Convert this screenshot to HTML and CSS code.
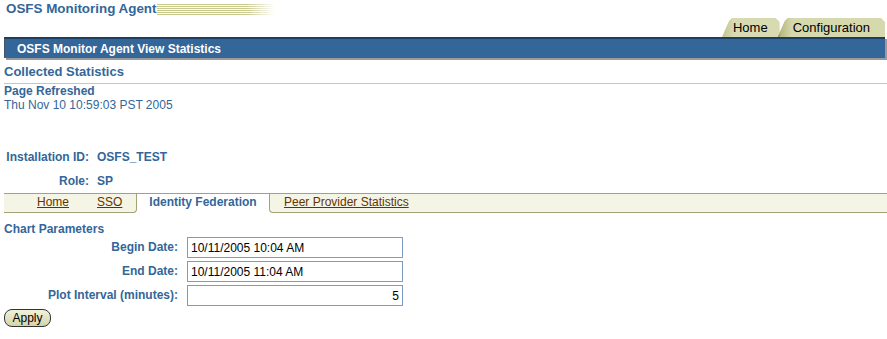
FILE: index.html
```html
<!DOCTYPE html>
<html lang="en">
<head>
  <meta charset="UTF-8">
  <title>OSFS Monitoring Agent</title>
  <link rel="stylesheet" href="styles.css">
</head>
<body>

  <!-- Branding -->
  <div class="branding">
    <span class="app-name">OSFS Monitoring Agent</span>
    <span class="deco"></span>
  </div>

  <!-- Global tabs -->
  <div class="global-tabs">
    <div class="gtab gtab-home">Home</div>
    <div class="gtab gtab-config">Configuration</div>
  </div>

  <div class="title-bar">OSFS Monitor Agent View Statistics</div>

  <div class="section-head">Collected Statistics</div>

  <div class="refresh">
    <div class="refresh-label">Page Refreshed</div>
    <div class="refresh-date">Thu Nov 10 10:59:03 PST 2005</div>
  </div>

  <div class="info">
    <div class="info-label">Installation ID:</div>
    <div class="info-value">OSFS_TEST</div>
    <div class="info-label">Role:</div>
    <div class="info-value">SP</div>
  </div>

  <!-- Sub tabs -->
  <div class="subtabs">
    <div class="subtab-group left">
      <a href="#" class="sublink home-link">Home</a>
      <a href="#" class="sublink">SSO</a>
    </div>
    <div class="subtab-selected">Identity Federation</div>
    <div class="subtab-group right">
      <a href="#" class="sublink">Peer Provider Statistics</a>
    </div>
  </div>

  <div class="chart-head">Chart Parameters</div>

  <div class="chart-form">
    <label class="form-label" for="begin">Begin Date:</label>
    <input class="form-input" id="begin" type="text" value="10/11/2005 10:04 AM">
    <label class="form-label" for="end">End Date:</label>
    <input class="form-input" id="end" type="text" value="10/11/2005 11:04 AM">
    <label class="form-label" for="interval">Plot Interval (minutes):</label>
    <input class="form-input num" id="interval" type="text" value="5">
  </div>

  <button class="apply">Apply</button>

</body>
</html>
```

FILE: styles.css
```css
body {
  font-family: 'Liberation Sans', Arial, sans-serif;
  font-size: 12px;
  color: #336699;
  background-color: white;
  margin: 0;
  padding: 0 2px 0 4px;
}
.branding {
  display: flex;
  align-items: flex-start;
  height: 18px;
}
.app-name {
  font-size: 13.4px;
  font-weight: bold;
  line-height: 18px;
  padding-left: 2px;
}
.deco {
  display: block;
  width: 118px;
  height: 11px;
  margin-top: 4px;
  background:
    linear-gradient(to right, rgba(255,255,255,0) 75%, #fff 100%),
    repeating-linear-gradient(to bottom, #c8c98c 0, #c8c98c 1px, #fff 1px, #fff 2px);
}
.global-tabs {
  display: flex;
  justify-content: flex-end;
  height: 19px;
}
.gtab {
  height: 19px;
  line-height: 20px;
  color: #000;
  font-size: 13px;
  background: linear-gradient(to right, #c2c48e 0, #d8dab2 12px, #d8dab2 100%);
  clip-path: polygon(0 100%, 7px 3px, 10px 0, calc(100% - 4px) 0, 100% 4px, 100% 100%);
}
.gtab-home {
  padding: 0 12px 0 11px;
}
.gtab-config {
  margin-left: -2px;
  padding: 0 15px 0 15px;
  background: linear-gradient(to right, #8e8f5e 0, #b9bb80 3px, #d6d8ae 14px, #d6d8ae 100%);
}
.title-bar {
  height: 19px;
  line-height: 20px;
  background-color: #336699;
  color: white;
  font-weight: bold;
  padding-left: 12px;
  border-top: 2px solid #1d3d63;
  border-left: 1px solid #44556a;
  box-shadow: 2px 2px 0 #9a9a9a;
}
.section-head {
  margin-top: 6px;
  font-size: 13px;
  font-weight: bold;
  line-height: 16px;
  border-bottom: 1px solid #cccc99;
  padding-bottom: 3px;
  margin-right: -2px;
}
.refresh {
  line-height: 14px;
}
.refresh-label {
  font-weight: bold;
}
.info {
  display: grid;
  grid-template-columns: 85px auto;
  column-gap: 8px;
  row-gap: 10px;
  margin-top: 38px;
  font-weight: bold;
  line-height: 14px;
}
.info-label {
  text-align: right;
}
.subtabs {
  display: flex;
  margin-top: 5px;
  margin-right: -2px;
  height: 19px;
  border-top: 1px solid #a3a37a;
  line-height: 17px;
}
.subtab-group {
  background-color: #f5f5e6;
  border-bottom: 1px solid #a3a37a;
  display: flex;
}
.subtab-group.left {
  width: 132px;
  border-right: 1px solid #a3a37a;
  border-bottom-right-radius: 4px;
}
.subtab-group.right {
  flex: 1;
  border-left: 1px solid #a3a37a;
  border-bottom-left-radius: 4px;
  padding-left: 14px;
}
.sublink {
  color: #663300;
}
.home-link {
  margin-left: 33px;
  margin-right: 28px;
}
.subtab-selected {
  width: 132px;
  text-align: center;
  font-weight: bold;
  background-color: white;
}
.chart-head {
  margin-top: 9px;
  font-weight: bold;
  line-height: 14px;
}
.chart-form {
  display: grid;
  grid-template-columns: 174px 216px;
  column-gap: 9px;
  row-gap: 3px;
  margin-top: 1px;
}
.form-label {
  text-align: right;
  font-weight: bold;
  line-height: 21px;
}
.form-input {
  height: 21px;
  box-sizing: border-box;
  border: 1px solid #7e9cc0;
  font-family: 'Liberation Sans', Arial, sans-serif;
  font-size: 12px;
  color: #000;
  padding: 0 3px;
  margin: 0;
}
.form-input.num {
  text-align: right;
}
.apply {
  margin-top: 3px;
  height: 18px;
  width: 47px;
  padding: 0;
  font-family: 'Liberation Sans', Arial, sans-serif;
  font-size: 12px;
  color: #000;
  background: linear-gradient(to bottom, #f2f2dc, #d4d4aa);
  border: 1px solid #333;
  border-radius: 8px;
}
```
